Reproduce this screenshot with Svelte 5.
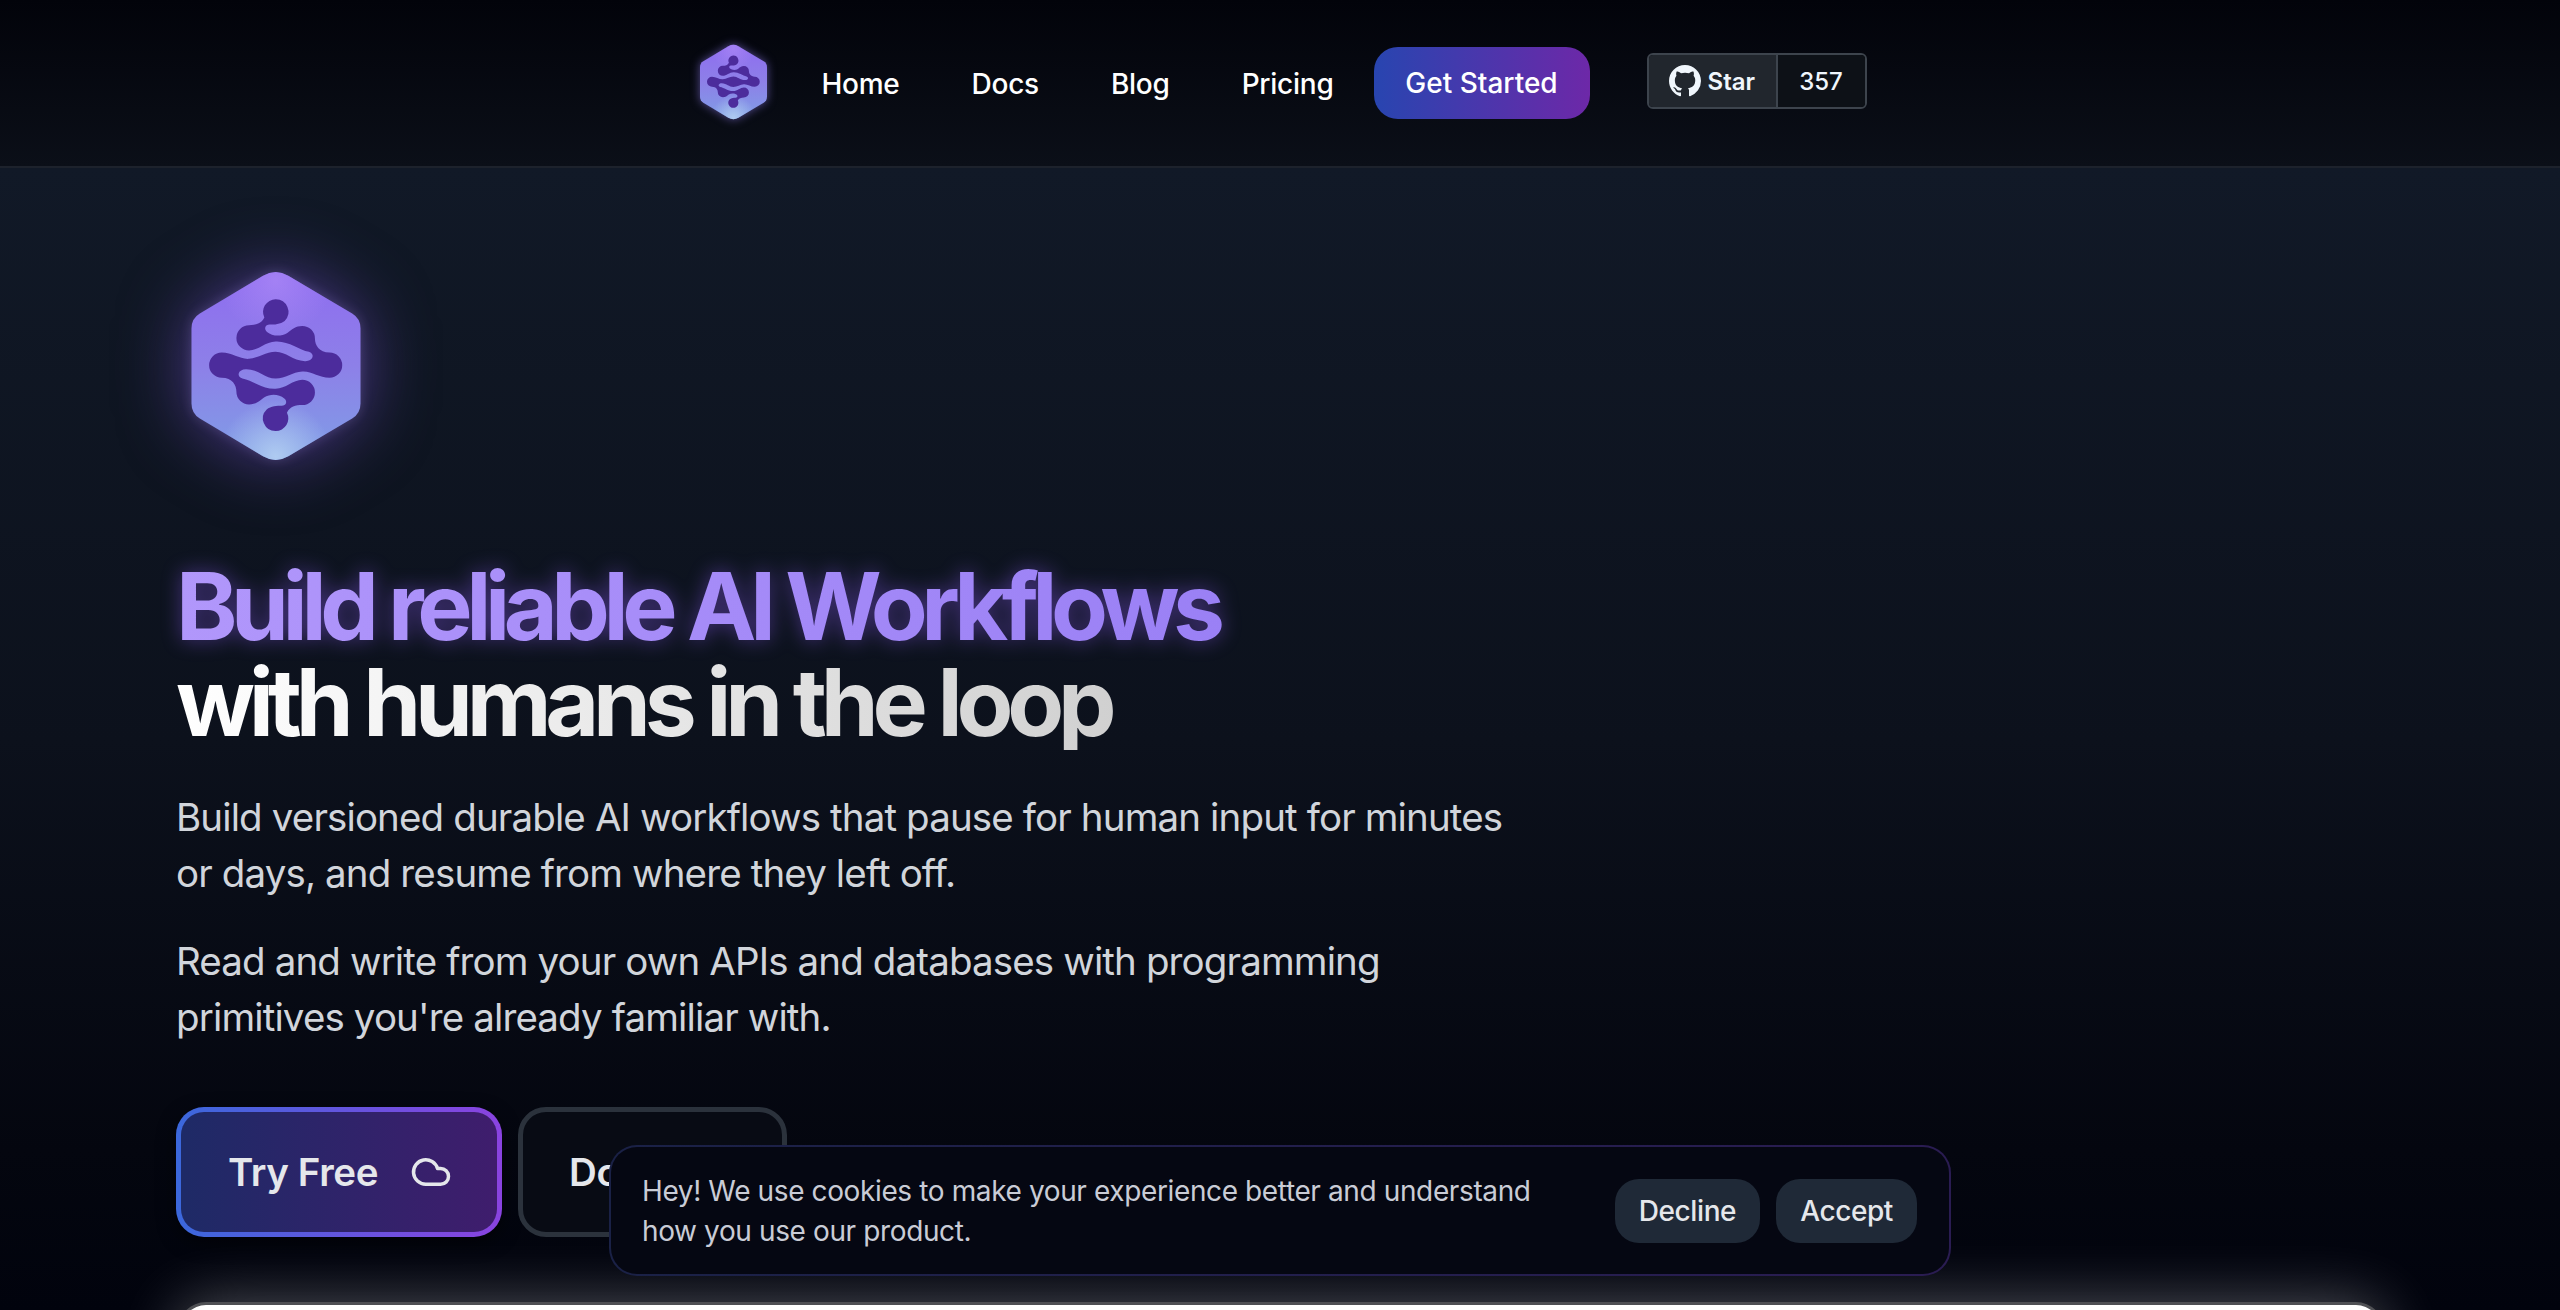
<script>
  const links = ['Home', 'Docs', 'Blog', 'Pricing'];
  const hex = 'M372 136 Q410 114 448 136 L640 250 Q665 265 665 295 L665 520 Q665 550 640 565 L448 679 Q410 701 372 679 L182 565 Q157 550 157 520 L157 295 Q157 265 182 250 Z';
  const blob = 'M410 207 A38 38 0 0 1 437 272 C425 282 405 283 392 283 C378 283 374 297 384 305 C400 318 425 320 445 308 C458 298 470 287 490 287 A38 38 0 0 1 528 325 C528 345 540 367 572 367 A38 38 0 0 1 572 443 C540 443 518 422 490 424 C460 426 440 445 410 445 C378 445 360 418 322 417 C298 416 290 438 310 445 C340 450 370 478 410 476 C440 476 462 449 490 449 A38 38 0 0 1 490 525 C470 525 452 530 444 548 A38 38 0 0 1 410 603 A38 38 0 0 1 383 538 C395 528 415 527 428 527 C442 527 446 513 436 505 C420 492 395 490 375 502 C362 512 350 523 330 523 A38 38 0 0 1 292 485 C292 465 280 443 248 443 A38 38 0 0 1 248 367 C280 367 302 388 330 386 C360 384 380 365 410 365 C442 365 460 392 498 393 C522 394 530 372 510 365 C480 360 450 332 410 334 C380 334 358 361 330 361 A38 38 0 0 1 330 285 C350 285 368 280 376 262 A38 38 0 0 1 410 207 Z';
</script>

{#snippet mark(id, cls)}
  <svg class={cls} viewBox="157 125 508 565" aria-hidden="true">
    <defs>
      <linearGradient id="{id}-base" gradientUnits="userSpaceOnUse" x1="410" y1="125" x2="410" y2="690">
        <stop offset="0" stop-color="#8f6cf0" />
        <stop offset="0.5" stop-color="#8d80e8" />
        <stop offset="1" stop-color="#7f9ee6" />
      </linearGradient>
      <radialGradient id="{id}-top" gradientUnits="userSpaceOnUse" cx="410" cy="150" r="170">
        <stop offset="0" stop-color="#b18ef8" stop-opacity="0.6" />
        <stop offset="1" stop-color="#b18ef8" stop-opacity="0" />
      </radialGradient>
      <radialGradient id="{id}-bottom" gradientUnits="userSpaceOnUse" cx="410" cy="680" r="170">
        <stop offset="0" stop-color="#b4d0f2" stop-opacity="0.9" />
        <stop offset="1" stop-color="#b4d0f2" stop-opacity="0" />
      </radialGradient>
    </defs>
    <path d={hex} fill="url(#{id}-base)" />
    <path d={hex} fill="url(#{id}-top)" />
    <path d={hex} fill="url(#{id}-bottom)" />
    <path d={blob} fill="#4c2c9c" />
  </svg>
{/snippet}

<div class="page">
  <header class="nav">
    {@render mark('nav', 'nav-logo')}
    <nav class="links">
      {#each links as link}
        <a href="#top" class="link">{link}</a>
      {/each}
    </nav>
    <a href="#top" class="cta">Get Started</a>
    <div class="gh">
      <span class="gh-star">
        <svg viewBox="0 0 16 16" class="octo" aria-hidden="true"><path fill="currentColor" d="M8 0C3.58 0 0 3.58 0 8c0 3.54 2.29 6.53 5.47 7.59.4.07.55-.17.55-.38 0-.19-.01-.82-.01-1.49-2.01.37-2.53-.49-2.69-.94-.09-.23-.48-.94-.82-1.13-.28-.15-.68-.52-.01-.53.63-.01 1.08.58 1.23.82.72 1.21 1.87.87 2.33.66.07-.52.28-.87.51-1.07-1.78-.2-3.64-.89-3.64-3.95 0-.87.31-1.59.82-2.15-.08-.2-.36-1.02.08-2.12 0 0 .67-.21 2.2.82.64-.18 1.32-.27 2-.27.68 0 1.36.09 2 .27 1.53-1.04 2.2-.82 2.2-.82.44 1.1.16 1.92.08 2.12.51.56.82 1.27.82 2.15 0 3.07-1.87 3.75-3.65 3.95.29.25.54.73.54 1.48 0 1.07-.01 1.93-.01 2.2 0 .21.15.46.55.38A8.013 8.013 0 0016 8c0-4.42-3.58-8-8-8z" /></svg>
        Star
      </span>
      <span class="gh-count">357</span>
    </div>
  </header>

  <main class="hero">
    {@render mark('hero', 'hero-logo')}
    <h1>
      <span class="line one">Build reliable AI Workflows</span>
      <span class="line two">with humans in the loop</span>
    </h1>
    <p>Build versioned durable AI workflows that pause for human input for minutes or days, and resume from where they left off.</p>
    <p>Read and write from your own APIs and databases with programming primitives you're already familiar with.</p>
    <div class="actions">
      <a href="#top" class="btn primary">
        Try Free
        <svg viewBox="0 0 24 24" class="cloud" aria-hidden="true"><path d="M17.5 19H9a7 7 0 1 1 6.71-9h1.79a4.5 4.5 0 1 1 0 9Z" /></svg>
      </a>
      <a href="#top" class="btn secondary">Docs</a>
    </div>
    <div class="preview"></div>
  </main>

  <aside class="cookie">
    <span class="cookie-text">Hey! We use cookies to make your experience better and understand how you use our product.</span>
    <div class="cookie-actions">
      <button type="button">Decline</button>
      <button type="button">Accept</button>
    </div>
  </aside>
</div>

<style>
  :global(body) {
    margin: 0;
    background: #050811;
  }
  .page {
    height: 1310px;
    overflow: hidden;
    position: relative;
    font-family: Inter, "Noto Sans", sans-serif;
    background: linear-gradient(180deg, #111927 168px, #0c111c 740px, #04060f 1150px, #01030d 100%);
    color: #fff;
  }
  a { text-decoration: none; color: inherit; }

  .nav {
    height: 168px;
    display: flex;
    align-items: center;
    justify-content: center;
    box-sizing: border-box;
    border-bottom: 2px solid #1d222c;
    background: linear-gradient(180deg, #02030a 0%, #0b0f18 100%);
    padding: 2px 0 0 7px;
  }
  .nav-logo {
    width: 67px;
    height: 76px;
    margin-top: -4px;
    filter: drop-shadow(0 0 5px rgba(150, 130, 250, 0.55));
  }
  .links {
    display: flex;
    margin-left: 18px;
  }
  .link {
    padding: 0 36px;
    font-size: 28px;
    font-weight: 500;
    letter-spacing: -0.25px;
    line-height: 40px;
    color: #fff;
  }
  .cta {
    margin-left: 4px;
    width: 216px;
    height: 72px;
    margin-top: -2px;
    display: flex;
    align-items: center;
    justify-content: center;
    border-radius: 24px;
    font-size: 28px;
    font-weight: 500;
    background: linear-gradient(90deg, #2845b0, #6d28a8);
  }
  .gh {
    margin-left: 57px;
    margin-top: -6px;
    display: flex;
    height: 56px;
    box-sizing: border-box;
    border: 2px solid #3d444d;
    border-radius: 6px;
    font-size: 24px;
    font-weight: 600;
    color: #f0f6fc;
    overflow: hidden;
  }
  .gh-star {
    width: 129px;
    display: flex;
    align-items: center;
    gap: 7px;
    padding-left: 20px;
    box-sizing: border-box;
    background: #21262d;
    border-right: 2px solid #3d444d;
  }
  .octo { width: 32px; height: 32px; }
  .gh-count {
    width: 87px;
    display: flex;
    align-items: center;
    justify-content: center;
    font-weight: 500;
    background: #0d1117;
  }

  .hero {
    padding: 104px 176px 0;
  }
  .hero-logo {
    display: block;
    width: 170px;
    height: 188px;
    margin-left: 15px;
    filter: drop-shadow(0 0 6px rgba(190, 170, 255, 0.2)) drop-shadow(0 0 34px rgba(139, 92, 246, 0.5));
  }
  h1 {
    margin: 98px 0 0;
    font-size: 93px;
    line-height: 96px;
    font-weight: 700;
    letter-spacing: -0.067em;
  }
  .line {
    display: block;
    width: fit-content;
    background-clip: text;
    -webkit-background-clip: text;
    color: transparent;
    padding-right: 10px;
  }
  .one {
    letter-spacing: -0.069em;
    background-image: linear-gradient(90deg, #b197fb, #9a80f5);
    filter: drop-shadow(0 0 10px rgba(139, 92, 246, 0.45));
  }
  .two {
    background-image: linear-gradient(90deg, #ffffff, #d0d0d0);
  }
  p {
    margin: 38.5px 0 0;
    max-width: 1340px;
    font-size: 38.5px;
    letter-spacing: -0.87px;
    line-height: 56px;
    color: #d1d5db;
  }
  p + p { margin-top: 32px; }

  .actions {
    display: flex;
    gap: 16px;
    margin-top: 62.5px;
  }
  .btn {
    height: 130px;
    box-sizing: border-box;
    display: flex;
    align-items: center;
    font-size: 38.5px;
    letter-spacing: -0.4px;
    font-weight: 600;
    color: #e5e7eb;
    border-radius: 28px;
    border: 5px solid transparent;
  }
  .primary {
    width: 326px;
    padding-left: 47px;
    gap: 31.5px;
    background:
      linear-gradient(90deg, #1e2a66, #3f1d6d) padding-box,
      linear-gradient(90deg, #3b68dc, #8a43e0) border-box;
    box-shadow: 0 6px 18px rgba(0, 0, 0, 0.5);
  }
  .secondary {
    width: 269px;
    padding-left: 46px;
    border-color: #2b323c;
    background: #080b14;
  }
  .cloud {
    width: 42px;
    height: 42px;
    fill: none;
    stroke: currentColor;
    stroke-width: 2;
    stroke-linecap: round;
    stroke-linejoin: round;
  }

  .preview {
    height: 600px;
    margin: 64.5px 0 0 2px;
    background: #fff;
    box-sizing: border-box;
    border: 3px solid #4f5054;
    border-bottom: 0;
    border-radius: 28px 28px 0 0;
    box-shadow: 0 0 60px rgba(255, 255, 255, 0.32);
  }

  .cookie {
    position: absolute;
    left: 609px;
    top: 1145px;
    width: 1342px;
    height: 131px;
    box-sizing: border-box;
    display: flex;
    align-items: center;
    justify-content: space-between;
    padding: 0 32px 0 31px;
    border-radius: 28px;
    border: 2px solid transparent;
    background:
      linear-gradient(#050712, #050712) padding-box,
      linear-gradient(90deg, #1a2146, #2a1c52) border-box;
  }
  .cookie-text {
    width: 930px;
    font-size: 28px;
    letter-spacing: -0.38px;
    line-height: 40px;
    color: #c9ccd6;
  }
  .cookie-actions {
    display: flex;
    gap: 16px;
  }
  button {
    height: 64px;
    padding: 0 24px;
    border: 0;
    border-radius: 24px;
    background: #1f2937;
    color: #e5e7eb;
    font: 500 28px Inter, sans-serif;
    letter-spacing: -0.4px;
  }
</style>
